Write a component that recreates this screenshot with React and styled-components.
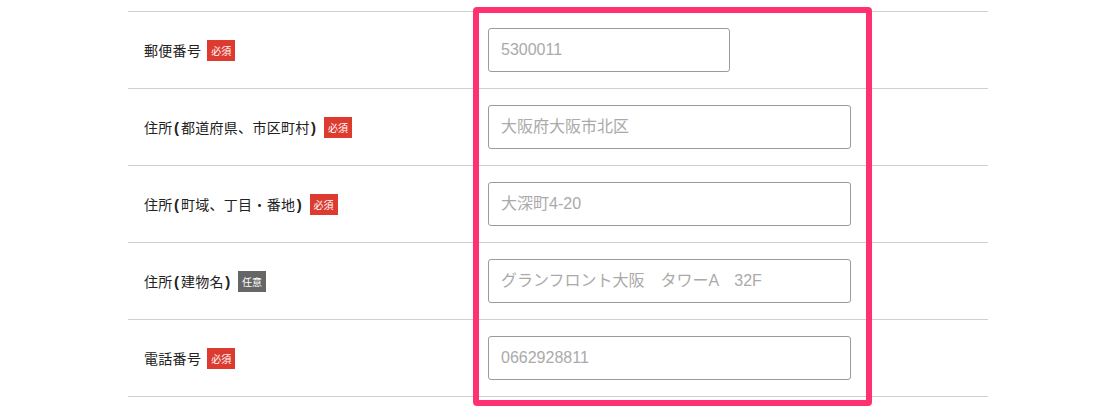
import styled, { createGlobalStyle } from "styled-components";

const GlobalStyle = createGlobalStyle`
  body {
    margin: 0;
    background: #fff;
    font-family: "Noto Sans CJK JP", "Liberation Sans", sans-serif;
    color: #222;
  }
`;

const fields = [
  { id: "zip", label: ["郵便番号"], required: true, placeholder: "5300011", short: true },
  { id: "pref", label: ["住所", "(", "都道府県、市区町村", ")"], required: true, placeholder: "大阪府大阪市北区" },
  { id: "town", label: ["住所", "(", "町域、丁目・番地", ")"], required: true, placeholder: "大深町4-20" },
  { id: "bldg", label: ["住所", "(", "建物名", ")"], required: false, placeholder: "グランフロント大阪　タワーA　32F" },
  { id: "tel", label: ["電話番号"], required: true, placeholder: "0662928811" },
];

const StyledPage = styled.div`
  padding: 11px 131px 10px 128px;
`;

const StyledTable = styled.div`
  position: relative;
  border-top: 1px solid #cfcfcf;
`;

const StyledRow = styled.div`
  display: grid;
  grid-template-columns: 360px 1fr;
  align-items: center;
  height: 76px;
  border-bottom: 1px solid #cfcfcf;
`;

const StyledLabel = styled.div`
  display: flex;
  align-items: center;
  padding-left: 16px;
  font-size: 14px;
  letter-spacing: 0.3px;
`;

const StyledParen = styled.span`
  font-weight: 700;
  font-family: "Liberation Sans", sans-serif;
  font-size: 15px;
  margin: 0 1.5px;
`;

const StyledBadge = styled.span`
  display: inline-flex;
  align-items: center;
  justify-content: center;
  width: 28px;
  height: 21px;
  margin-left: 6px;
  font-size: 10px;
  letter-spacing: 0;
  color: #fff;
  background: ${({ $required }) => ($required ? "#dd3b2f" : "#666666")};
`;

const StyledInput = styled.input`
  box-sizing: border-box;
  width: ${({ $short }) => ($short ? "242px" : "363px")};
  height: 44px;
  padding: 0 12px;
  border: 1px solid #9b9b9b;
  border-radius: 3px;
  font-family: "Liberation Sans", "Noto Sans CJK JP", sans-serif;
  font-size: 16px;
  outline: none;

  &::placeholder {
    color: #aaaaaa;
  }
`;

const StyledHighlight = styled.div`
  position: absolute;
  left: 345px;
  top: -5px;
  width: 399px;
  height: 399px;
  box-sizing: border-box;
  border: 6px solid #ff3170;
  border-radius: 4px;
  pointer-events: none;
`;

const App = () => (
  <StyledPage>
    <GlobalStyle />
    <StyledTable>
      {fields.map((field) => (
        <StyledRow key={field.id}>
          <StyledLabel>
            <span>
              {field.label.map((part, i) =>
                part === "(" || part === ")" ? (
                  <StyledParen key={i}>{part}</StyledParen>
                ) : (
                  <span key={i}>{part}</span>
                )
              )}
            </span>
            <StyledBadge $required={field.required}>
              {field.required ? "必須" : "任意"}
            </StyledBadge>
          </StyledLabel>
          <div>
            <StyledInput $short={field.short} placeholder={field.placeholder} />
          </div>
        </StyledRow>
      ))}
      <StyledHighlight />
    </StyledTable>
  </StyledPage>
);

export default App;
